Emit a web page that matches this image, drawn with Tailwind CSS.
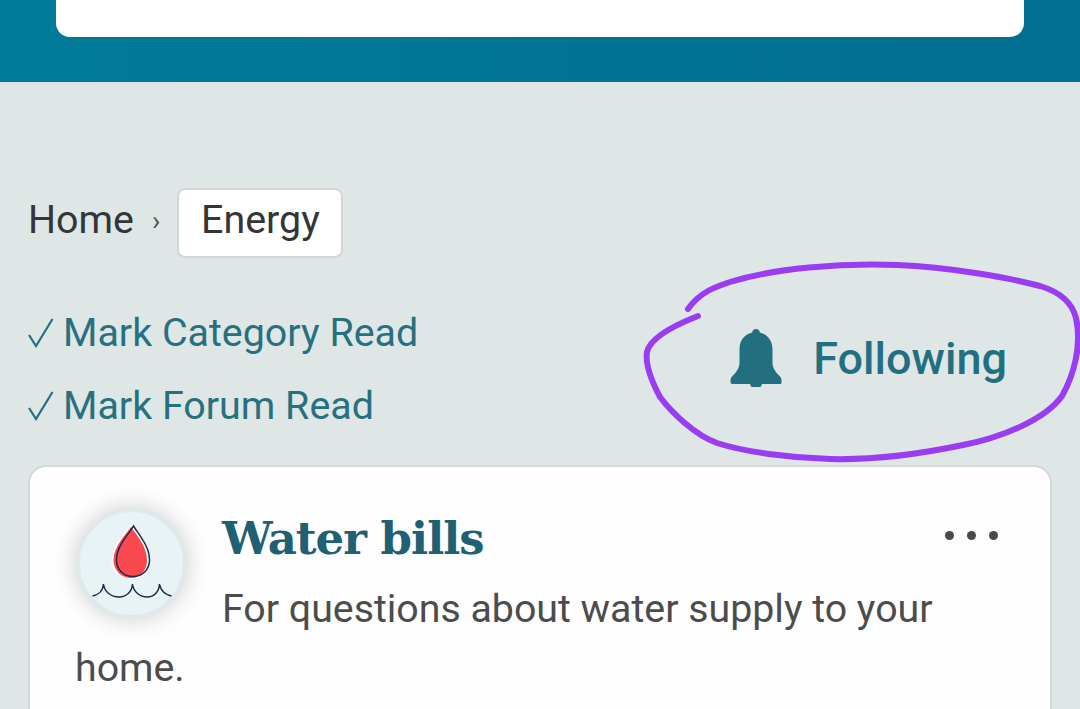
<!DOCTYPE html>
<html>
<head>
<meta charset="utf-8">
<script src="https://cdn.jsdelivr.net/npm/@tailwindcss/browser@4"></script>
</head>
<body class="m-0 p-0">
<div class="relative w-[1080px] h-[709px] overflow-hidden bg-[#dee7e6] font-['Roboto',sans-serif]">
  <header class="h-[82px] bg-gradient-to-r from-[#017a9a] to-[#016f90] px-[56px]">
    <div class="h-[37px] bg-white rounded-b-[14px]"></div>
  </header>

  <main class="px-[28px] pt-[106px]">
    <nav class="flex items-center h-[70px] text-[39.4px] leading-none text-[#333636]">
      <span class="pb-[6px]">Home</span>
      <span class="ml-[18px] mr-[17px] pb-[4px] text-[28px] text-[#555]">›</span>
      <span class="flex items-center justify-center pb-[6px] h-[70px] w-[166px] bg-white border-2 border-[#d2d6d7] rounded-[8px]">Energy</span>
    </nav>

    <div class="flex justify-between mt-[37px] h-[170px]">
      <div class="flex flex-col gap-[33px] text-[#26707f] text-[39.4px] leading-[40px] pt-[18px]">
        <a class="flex items-center gap-[9px]"><svg class="w-[26px] h-[30px]" viewBox="0 0 26 30" fill="none" stroke="currentColor" stroke-width="2.2"><path d="M1 17 L8 28 L24.500 1"/></svg><span>Mark Category Read</span></a>
        <a class="flex items-center gap-[9px]"><svg class="w-[26px] h-[30px]" viewBox="0 0 26 30" fill="none" stroke="currentColor" stroke-width="2.2"><path d="M1 17 L8 28 L24.500 1"/></svg><span>Mark Forum Read</span></a>
      </div>
      <div class="flex items-start gap-[31px] pr-[45px] pt-[34px] text-[#22707f] text-[45px] leading-[58px] font-medium">
        <svg class="w-[52px] h-[58px]" viewBox="0 0 52 58" fill="currentColor"><path d="M26 0c2.200 0 3.700 1.500 3.800 3.500C38 5.500 42.500 12 42.500 20v14c0 4 2 8 6.500 12.500 2 2 2.500 3 2.500 5.500v1.500c0 .8-.7 1.500-1.500 1.500h-47C1.700 55 .5 54.300 .5 53.500V52c0-2.500.5-3.500 2.500-5.500C7.500 42 9.500 38 9.500 34V20c0-8 4.500-14.500 12.700-16.500C22.300 1.500 23.800 0 26 0zM20 54h12c0 3.500-2.600 5.500-6 5.500S20 57.500 20 54z"/></svg>
        <span class="mt-[1px]">Following</span>
      </div>
    </div>

    <section class="w-[1024px] h-[320px] bg-[#fefefe] border-2 border-[#d2d8dc] rounded-[18px] pl-[45px] pr-[46px] pt-[30px] relative">
      <div class="float-left w-[111px] h-[111px] ml-[1px] mr-[35px] mt-[11px] rounded-full bg-[#e8f3f6] border-[4px] border-[#dfe8ea] shadow-[0_0_24px_rgba(0,0,0,0.2)] flex items-center justify-center">
        <svg class="w-[84px] h-[88px] shrink-0" viewBox="0 0 84 88" fill="none">
          <path d="M41 5 C34 14 21.500 27 21.500 41 C21.500 52 31 59 41 59 C51 59 60 50 60 41 C60 27 49 14 43 5Z" fill="#ffffff"/>
          <path d="M41 7 C35 15 23.500 27 23.500 40 C23.500 51 32 58 41 58 C51 58 57 50 57 40 C57 27 47 15 41 7Z" fill="#fb4a4f"/>
          <path d="M43.500 6 C49 15 59.500 26 59.500 40 C59.500 50 52 56.500 43 56.500 C34 56.500 26.500 50 26.500 40 C26.500 26 38 15 43.500 6Z" stroke="#1f2a4a" stroke-width="1.500"/>
          <path d="M2.500 76 C8 75 13 71 13.500 64 C14.500 72 21 77 29 77 C36 77 42 72 42.500 64 C43.500 72 50 77 57 77 C64 77 69 72 69.500 64 C70.500 71 76 75 81.500 76" stroke="#1f2a4a" stroke-width="1.500"/>
        </svg>
      </div>
      <div class="absolute right-[52px] top-[64px] flex gap-[13px]">
        <span class="w-[9px] h-[9px] rounded-full bg-[#4a4a4a]"></span>
        <span class="w-[9px] h-[9px] rounded-full bg-[#4a4a4a]"></span>
        <span class="w-[9px] h-[9px] rounded-full bg-[#4a4a4a]"></span>
      </div>
      <h2 class="pl-[2px] font-['DejaVu_Serif',serif] font-bold text-[#1f6072] text-[45px] leading-[83px] tracking-[-1px]">Water bills</h2>
      <p class="text-[39.3px] leading-[59px] text-[#4c4c4c]">For questions about water supply to your home.</p>
    </section>
  </main>

  <svg class="absolute left-0 top-0 pointer-events-none" width="1080" height="709" viewBox="0 0 1080 709" fill="none" stroke="#9a3cf2" stroke-linecap="round" stroke-linejoin="round">
    <path stroke-width="6" d="M688 309 C700 292 715 287 730 282 C775 268 840 263 897 265 C950 267 1010 278 1040 286 C1060 292 1072 302 1076 318 C1082 345 1074 375 1062 396 C1045 420 1000 438 963 445 C920 454 870 460 830 459 C790 458 745 452 717 443 C695 435 672 413 660 397 C652 382 645 365 647 352 C650 338 675 325 698 316"/>
  </svg>
</div>
</body>
</html>
